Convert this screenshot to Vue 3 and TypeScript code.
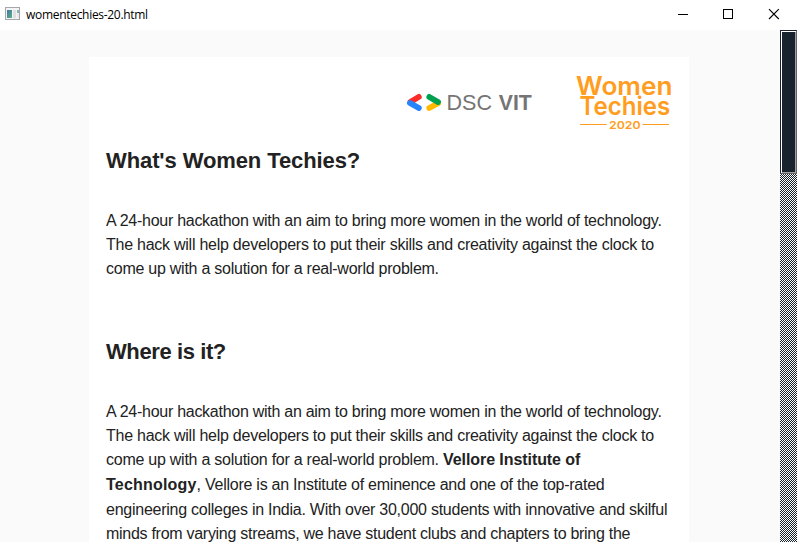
<script setup lang="ts">
const intro: string[] = [
  'A 24-hour hackathon with an aim to bring more women in the world of technology.',
  'The hack will help developers to put their skills and creativity against the clock to',
  'come up with a solution for a real-world problem.',
]
</script>

<template>
  <div class="window">
    <header class="titlebar">
      <svg class="app-icon" width="16" height="14" viewBox="0 0 16 14">
        <defs>
          <linearGradient id="pane" x1="0" y1="0" x2="1" y2="1">
            <stop offset="0" stop-color="#4774a5" />
            <stop offset="1" stop-color="#55b285" />
          </linearGradient>
        </defs>
        <rect x="0.5" y="0.5" width="14" height="12" fill="#f4f4f4" stroke="#a3a6aa" />
        <rect x="2" y="3" width="5" height="8" fill="url(#pane)" />
        <rect x="8" y="3" width="3" height="8" fill="#dedfe3" />
        <rect x="12" y="3" width="2" height="3" fill="#8bb6b5" />
        <rect x="12" y="6" width="2" height="5" fill="#e9e9ed" />
      </svg>
      <span class="name">womentechies-20.html</span>
      <svg class="controls" width="138" height="30" viewBox="0 0 138 30" fill="none" stroke="#000">
        <path d="M19 14.5h10" />
        <rect x="64.5" y="9.5" width="9" height="9" />
        <path d="M110 9.200l9.800 9.800M119.800 9.200l-9.800 9.800" stroke-width="1.100" />
      </svg>
    </header>
    <div class="body">
      <main class="viewport">
        <article class="card">
          <div class="logos">
            <svg class="dsc" width="128" height="24" viewBox="0 0 128 24">
              <g stroke-width="5.800" stroke-linecap="round">
                <path d="M5.500 11L13.800 5.900" stroke="#f92b2b" />
                <path d="M5 12L13.800 17" stroke="#2684fc" />
                <path d="M33 12.300L24.300 17" stroke="#ffba00" />
                <path d="M24.300 5.900L33 11" stroke="#00a04e" />
              </g>
              <text x="41.500" y="19" textLength="45.500" lengthAdjust="spacingAndGlyphs" class="dsc-text">DSC</text>
              <text x="93.800" y="19" textLength="33" lengthAdjust="spacingAndGlyphs" class="dsc-text strong">VIT</text>
            </svg>
            <svg class="women" width="102" height="66" viewBox="0 0 102 66">
              <text x="3" y="25.700" textLength="96.500" lengthAdjust="spacingAndGlyphs" class="wt">Women</text>
              <text x="6.500" y="46.300" textLength="90.800" lengthAdjust="spacingAndGlyphs" class="wt">Techies</text>
              <path d="M7 55.500h26.500M69.500 55.500h26.500" stroke="#ff9d20" stroke-width="1.200" />
              <text x="36" y="59.500" textLength="31.500" lengthAdjust="spacingAndGlyphs" class="year">2020</text>
            </svg>
          </div>
          <h2>What's Women Techies?</h2>
          <p>
            <span class="line l1">{{ intro[0] }}</span>
            <span class="line">{{ intro[1] }}</span>
            <span class="line">{{ intro[2] }}</span>
          </p>
          <h2 class="next">Where is it?</h2>
          <p>
            <span class="line l1">{{ intro[0] }}</span>
            <span class="line">{{ intro[1] }}</span>
            <span class="line tall">{{ intro[2] }} <b>Vellore Institute of</b></span>
            <span class="line tall"><b class="tech">Technology</b>, Vellore is an Institute of eminence and one of the top-rated</span>
            <span class="line l5">engineering colleges in India. With over 30,000 students with innovative and skilful</span>
            <span class="line l6">minds from varying streams, we have student clubs and chapters to bring the</span>
          </p>
        </article>
      </main>
      <aside class="scrollbar"><div class="thumb"></div></aside>
    </div>
  </div>
</template>

<style>
body { margin: 0; overflow: hidden; }
</style>

<style scoped>
.window { width: 797px; height: 542px; overflow: hidden; background: #fff; display: flex; flex-direction: column; }
.titlebar { height: 30px; flex: none; display: flex; align-items: center; padding-left: 5px; }
.app-icon { margin-top: -2px; }
.name { margin-left: 5px; font: 12px/28px "Open Sans", sans-serif; letter-spacing: -0.3px; color: #000; }
.controls { margin-left: auto; }
.body { flex: 1; min-height: 0; display: flex; }
.viewport { flex: 1; background: #fafafa; padding: 27px 0 0 89px; overflow: hidden; }
.card { box-sizing: border-box; width: 600px; height: 520px; background: #fff; padding: 15px 17px 0; font-family: "Liberation Sans", Arial, sans-serif; color: #222; }
.logos { display: flex; height: 70px; padding-left: 299px; }
.dsc { margin-top: 19px; flex: none; }
.women { margin-left: 40px; margin-top: -3px; margin-right: -20px; flex: none; overflow: visible; }
.dsc-text { font: 22px "Liberation Sans", sans-serif; fill: #757575; }
.strong { font-weight: 700; }
.wt { font: 600 25px Inter, sans-serif; fill: #ff9d20; }
.year { font: 600 10.5px Inter, sans-serif; fill: #ff9d20; }
h2 { margin: 4px 0 0; font-size: 22px; line-height: 30px; font-weight: 700; letter-spacing: -0.1px; white-space: nowrap; }
h2.next { margin-top: 56px; letter-spacing: -0.4px; }
p { margin: 33px 0 0; font-size: 16px; }
.line { display: block; height: 24px; line-height: 24px; white-space: nowrap; letter-spacing: -0.25px; }
.l1 { letter-spacing: -0.27px; }
.l5 { letter-spacing: -0.254px; }
.l6 { letter-spacing: -0.28px; }
.tall { height: 25px; }
b { letter-spacing: -0.07px; }
.tech { letter-spacing: 0.2px; }
.scrollbar { width: 17px; box-sizing: border-box; background: repeating-conic-gradient(#19232e 0 25%, #fff 0 50%) 0 0 / 2px 2px; }
.thumb { box-sizing: border-box; height: 144px; border: 1px solid #19232e; border-right-color: #646464; border-bottom-color: #646464; background: #19232e; box-shadow: inset 1px 1px #fff, inset -1px -1px #a0a0a0; }
</style>
